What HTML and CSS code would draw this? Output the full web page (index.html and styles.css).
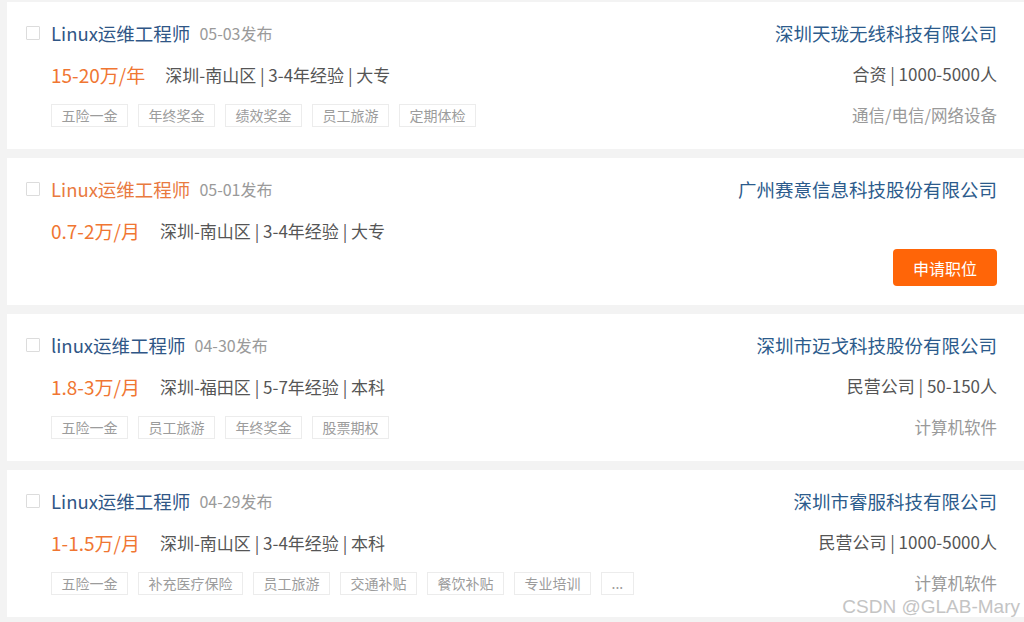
FILE: index.html
```html
<!DOCTYPE html>
<html lang="zh-CN">

<head>
    <meta charset="UTF-8">
    <meta name="viewport" content="width=device-width, initial-scale=1.0">
    <title>职位列表</title>
    <link rel="stylesheet" href="styles.css">
</head>

<body>
    <div class="job-list">
        <div class="job-card">
            <div class="job-main">
                <div class="job-title-row">
                    <span class="check"></span>
                    <a class="job-name" href="#">Linux运维工程师</a>
                    <span class="job-date">05-03发布</span>
                </div>
                <div class="job-info-row">
                    <span class="salary">15-20万/年</span>
                    <span class="job-info">深圳-南山区 | 3-4年经验 | 大专</span>
                </div>
                <div class="tags">
                    <span class="tag">五险一金</span>
                    <span class="tag">年终奖金</span>
                    <span class="tag">绩效奖金</span>
                    <span class="tag">员工旅游</span>
                    <span class="tag">定期体检</span>
                </div>
            </div>
            <div class="company">
                <a class="company-name" href="#">深圳天珑无线科技有限公司</a>
                <div class="company-info">合资 | 1000-5000人</div>
                <div class="industry">通信/电信/网络设备</div>
            </div>
        </div>

        <div class="job-card">
            <div class="job-main">
                <div class="job-title-row">
                    <span class="check"></span>
                    <a class="job-name visited" href="#">Linux运维工程师</a>
                    <span class="job-date">05-01发布</span>
                </div>
                <div class="job-info-row">
                    <span class="salary">0.7-2万/月</span>
                    <span class="job-info">深圳-南山区 | 3-4年经验 | 大专</span>
                </div>
            </div>
            <div class="company">
                <a class="company-name" href="#">广州赛意信息科技股份有限公司</a>
                <div class="company-info"></div>
                <button class="apply-btn">申请职位</button>
            </div>
        </div>

        <div class="job-card">
            <div class="job-main">
                <div class="job-title-row">
                    <span class="check"></span>
                    <a class="job-name" href="#">linux运维工程师</a>
                    <span class="job-date">04-30发布</span>
                </div>
                <div class="job-info-row">
                    <span class="salary">1.8-3万/月</span>
                    <span class="job-info">深圳-福田区 | 5-7年经验 | 本科</span>
                </div>
                <div class="tags">
                    <span class="tag">五险一金</span>
                    <span class="tag">员工旅游</span>
                    <span class="tag">年终奖金</span>
                    <span class="tag">股票期权</span>
                </div>
            </div>
            <div class="company">
                <a class="company-name" href="#">深圳市迈戈科技股份有限公司</a>
                <div class="company-info">民营公司 | 50-150人</div>
                <div class="industry">计算机软件</div>
            </div>
        </div>

        <div class="job-card">
            <div class="job-main">
                <div class="job-title-row">
                    <span class="check"></span>
                    <a class="job-name" href="#">Linux运维工程师</a>
                    <span class="job-date">04-29发布</span>
                </div>
                <div class="job-info-row">
                    <span class="salary">1-1.5万/月</span>
                    <span class="job-info">深圳-南山区 | 3-4年经验 | 本科</span>
                </div>
                <div class="tags">
                    <span class="tag">五险一金</span>
                    <span class="tag">补充医疗保险</span>
                    <span class="tag">员工旅游</span>
                    <span class="tag">交通补贴</span>
                    <span class="tag">餐饮补贴</span>
                    <span class="tag">专业培训</span>
                    <span class="tag">...</span>
                </div>
            </div>
            <div class="company">
                <a class="company-name" href="#">深圳市睿服科技有限公司</a>
                <div class="company-info">民营公司 | 1000-5000人</div>
                <div class="industry">计算机软件</div>
            </div>
        </div>
    </div>

    <div class="watermark">CSDN @GLAB-Mary</div>
</body>

</html>
```

FILE: styles.css
```css
* {
    margin: 0;
    padding: 0;
    box-sizing: border-box;
}

body {
    font-family: "Noto Sans CJK SC", "Noto Sans", sans-serif;
    background-color: #f3f3f3;
    width: 1024px;
    height: 622px;
    overflow: hidden;
    position: relative;
}

.job-list {
    padding: 2px 0 0 7px;
}

.job-card {
    display: flex;
    justify-content: space-between;
    height: 147px;
    margin-bottom: 9px;
    padding: 19px 27px 0 19px;
    background-color: #fff;
}

.job-title-row {
    display: flex;
    align-items: center;
    height: 24px;
}

.check {
    width: 14px;
    height: 14px;
    border: 1px solid #dcdcdc;
    border-radius: 1px;
    margin-right: 11px;
}

.job-name {
    font-size: 18.5px;
    color: #2f5686;
    text-decoration: none;
    margin-right: 9px;
}

.job-name.visited {
    color: #e97a3f;
}

.job-date {
    font-size: 16px;
    color: #9a9a9a;
}

.job-info-row {
    display: flex;
    align-items: center;
    height: 24px;
    margin-top: 17px;
    padding-left: 25px;
}

.salary {
    font-size: 19px;
    color: #f07632;
    margin-right: 20px;
}

.job-info {
    font-size: 17px;
    color: #555;
}

.tags {
    display: flex;
    gap: 10px;
    margin-top: 18px;
    padding-left: 25px;
}

.tag {
    height: 23px;
    line-height: 21px;
    padding: 0 9.5px;
    border: 1px solid #ececec;
    font-size: 14px;
    color: #9c9c9c;
}

.company {
    display: flex;
    flex-direction: column;
    align-items: flex-end;
}

.company-name {
    height: 24px;
    line-height: 24px;
    font-size: 18.5px;
    color: #2c5b8c;
    text-decoration: none;
}

.company-info {
    height: 24px;
    line-height: 24px;
    margin-top: 17px;
    font-size: 17px;
    color: #555;
}

.industry {
    height: 23px;
    line-height: 23px;
    margin-top: 18px;
    font-size: 16.5px;
    color: #999;
}

.apply-btn {
    width: 104px;
    height: 37px;
    margin-top: 7px;
    border: none;
    border-radius: 4px;
    background-color: #ff6508;
    color: #fff;
    font-family: inherit;
    font-size: 16px;
    cursor: pointer;
}

.watermark {
    position: absolute;
    right: 4px;
    bottom: 4px;
    font-family: "Liberation Sans", Arial, sans-serif;
    font-size: 19px;
    color: #c4c4c4;
}
```
